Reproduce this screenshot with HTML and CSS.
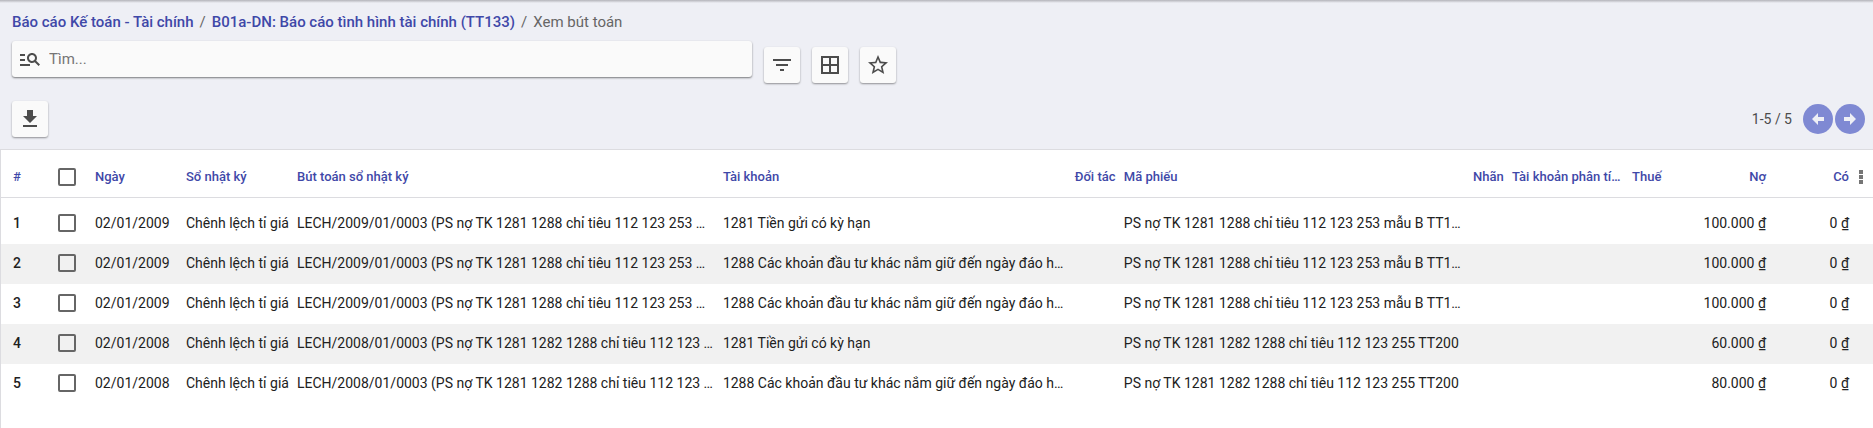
FILE: index.html
```html
<!DOCTYPE html>
<html lang="vi">
<head>
<meta charset="utf-8">
<title>Xem bút toán</title>
<link rel="stylesheet" href="styles.css">
</head>
<body>
<header class="panel">
  <nav class="breadcrumb" aria-label="Breadcrumb">
    <a href="#">Báo cáo Kế toán - Tài chính</a><span>/</span><a href="#">B01a-DN: Báo cáo tình hình tài chính (TT133)</a><span>/</span><span class="current">Xem bút toán</span>
  </nav>
  <div class="search-row">
    <label class="search">
      <svg class="icon" viewBox="0 0 24 24" aria-hidden="true"><path d="M7 9H2V7h5v2zm0 3H2v2h5v-2zm13.590 7-3.830-3.830c-.8.520-1.740.830-2.760.830-2.760 0-5-2.240-5-5s2.240-5 5-5 5 2.240 5 5c0 1.020-.310 1.960-.830 2.750L22 17.590 20.590 19zM17 11c0-1.650-1.350-3-3-3s-3 1.350-3 3 1.350 3 3 3 3-1.350 3-3zM2 19h10v-2H2v2z"/></svg>
      <input type="text" placeholder="Tìm..." aria-label="Tìm">
    </label>
    <div class="tools">
      <button class="tool" type="button" aria-label="Bộ lọc"><svg class="icon" viewBox="0 0 24 24"><path d="M10 18h4v-2h-4v2zM3 6v2h18V6H3zm3 7h12v-2H6v2z"/></svg></button>
      <button class="tool" type="button" aria-label="Nhóm theo"><svg class="icon" viewBox="0 0 24 24"><path d="M3 3v18h18V3H3zm8 16H5v-6h6v6zm0-8H5V5h6v6zm8 8h-6v-6h6v6zm0-8h-6V5h6v6z"/></svg></button>
      <button class="tool" type="button" aria-label="Yêu thích"><svg class="icon" viewBox="0 0 24 24"><path d="M22 9.240l-7.190-.620L12 2 9.190 8.630 2 9.240l5.460 4.730L5.820 21 12 17.270 18.180 21l-1.630-7.030L22 9.240zM12 15.400l-3.760 2.270 1-4.280-3.320-2.880 4.380-.380L12 6.100l1.710 4.040 4.380.380-3.320 2.880 1 4.280L12 15.400z"/></svg></button>
    </div>
  </div>
  <div class="action-row">
    <button class="tool" type="button" aria-label="Xuất"><svg class="icon" viewBox="0 0 24 24"><path d="M19 9h-4V3H9v6H5l7 7 7-7zM5 18v2h14v-2H5z"/></svg></button>
    <div class="pager">
      <span class="range">1-5 / 5</span>
      <button class="page" type="button" aria-label="Trước"><svg class="arrow" viewBox="0 0 12 12"><path d="M6 0v4h6v4H6v4L0 6z"/></svg></button>
      <button class="page" type="button" aria-label="Sau"><svg class="arrow" viewBox="0 0 12 12"><path d="M6 0v4H0v4h6v4l6-6z"/></svg></button>
    </div>
  </div>
</header>
<main class="sheet">
  <table class="list">
    <colgroup>
      <col class="c-num"><col class="c-check"><col class="c-date"><col class="c-journal"><col class="c-entry"><col class="c-account"><col class="c-partner"><col class="c-ref"><col class="c-label"><col class="c-analytic"><col class="c-tax"><col class="c-debit"><col class="c-credit"><col class="c-menu">
    </colgroup>
    <thead>
      <tr>
        <th>#</th><th><input type="checkbox" aria-label="Chọn tất cả"></th><th>Ngày</th><th>Sổ nhật ký</th><th>Bút toán sổ nhật ký</th><th>Tài khoản</th><th>Đối tác</th><th>Mã phiếu</th><th>Nhãn</th><th>Tài khoản phân tích</th><th>Thuế</th><th class="amount">Nợ</th><th class="amount">Có</th>
        <th class="menu-cell"><button class="menu" type="button" aria-label="Cột"><svg viewBox="0 0 4 14"><path d="M0 0h4v4H0zM0 5h4v4H0zM0 10h4v4H0z"/></svg></button></th>
      </tr>
    </thead>
    <tbody>
      <tr class="spacer"><td colspan="14"></td></tr>
      <tr><th>1</th><td><input type="checkbox" aria-label="Chọn dòng 1"></td><td>02/01/2009</td><td>Chênh lệch tỉ giá</td><td>LECH/2009/01/0003 (PS nợ TK 1281 1288 chỉ tiêu 112 123 253 mẫu B TT133)</td><td>1281 Tiền gửi có kỳ hạn</td><td></td><td>PS nợ TK 1281 1288 chỉ tiêu 112 123 253 mẫu B TT133</td><td></td><td></td><td></td><td class="amount">100.000 ₫</td><td class="amount">0 ₫</td><td></td></tr>
      <tr class="alt"><th>2</th><td><input type="checkbox" aria-label="Chọn dòng 2"></td><td>02/01/2009</td><td>Chênh lệch tỉ giá</td><td>LECH/2009/01/0003 (PS nợ TK 1281 1288 chỉ tiêu 112 123 253 mẫu B TT133)</td><td>1288 Các khoản đầu tư khác nắm giữ đến ngày đáo hạn</td><td></td><td>PS nợ TK 1281 1288 chỉ tiêu 112 123 253 mẫu B TT133</td><td></td><td></td><td></td><td class="amount">100.000 ₫</td><td class="amount">0 ₫</td><td></td></tr>
      <tr><th>3</th><td><input type="checkbox" aria-label="Chọn dòng 3"></td><td>02/01/2009</td><td>Chênh lệch tỉ giá</td><td>LECH/2009/01/0003 (PS nợ TK 1281 1288 chỉ tiêu 112 123 253 mẫu B TT133)</td><td>1288 Các khoản đầu tư khác nắm giữ đến ngày đáo hạn</td><td></td><td>PS nợ TK 1281 1288 chỉ tiêu 112 123 253 mẫu B TT133</td><td></td><td></td><td></td><td class="amount">100.000 ₫</td><td class="amount">0 ₫</td><td></td></tr>
      <tr class="alt"><th>4</th><td><input type="checkbox" aria-label="Chọn dòng 4"></td><td>02/01/2008</td><td>Chênh lệch tỉ giá</td><td>LECH/2008/01/0003 (PS nợ TK 1281 1282 1288 chỉ tiêu 112 123 255 TT200)</td><td>1281 Tiền gửi có kỳ hạn</td><td></td><td>PS nợ TK 1281 1282 1288 chỉ tiêu 112 123 255 TT200</td><td></td><td></td><td></td><td class="amount">60.000 ₫</td><td class="amount">0 ₫</td><td></td></tr>
      <tr><th>5</th><td><input type="checkbox" aria-label="Chọn dòng 5"></td><td>02/01/2008</td><td>Chênh lệch tỉ giá</td><td>LECH/2008/01/0003 (PS nợ TK 1281 1282 1288 chỉ tiêu 112 123 255 TT200)</td><td>1288 Các khoản đầu tư khác nắm giữ đến ngày đáo hạn</td><td></td><td>PS nợ TK 1281 1282 1288 chỉ tiêu 112 123 255 TT200</td><td></td><td></td><td></td><td class="amount">80.000 ₫</td><td class="amount">0 ₫</td><td></td></tr>
    </tbody>
  </table>
</main>
</body>
</html>
```
FILE: styles.css
```css
* { box-sizing: border-box; }
body {
  margin: 0;
  min-height: 100vh;
  display: flex;
  flex-direction: column;
  background: #eeeff5;
  color: #212121;
  font-family: Roboto, "Noto Sans", sans-serif;
  font-size: 14px;
}
button { border: 0; padding: 0; font: inherit; cursor: pointer; }
.icon { width: 24px; height: 24px; fill: #4c4c4c; flex: none; display: block; }

.panel {
  padding: 12px 8px 12px 12px;
  background: linear-gradient(#b4b4ba, #eeeff5 3px);
}
.breadcrumb {
  display: flex;
  gap: 6px;
  font-size: 15px;
  line-height: 20px;
  color: #666;
  white-space: nowrap;
}
.breadcrumb a { color: #3f48a8; font-weight: 500; text-decoration: none; }
.search-row { display: flex; gap: 12px; margin-top: 9px; padding-right: 4px; }
.search {
  width: 40%;
  height: 36px;
  display: flex;
  align-items: center;
  gap: 7px;
  padding: 0 6px;
  background: #fafafa;
  border-radius: 3px;
  box-shadow: 0 1px 2px rgba(0, 0, 0, .5);
}
.search input {
  flex: 1;
  min-width: 0;
  border: 0;
  padding: 0;
  outline: 0;
  background: none;
  font: 400 15px Roboto, sans-serif;
}
.search input::placeholder { color: #757575; opacity: 1; }
.tools { display: flex; gap: 12px; padding-top: 6px; }
.tool {
  width: 36px;
  height: 36px;
  display: grid;
  place-items: center;
  background: #fafafa;
  border-radius: 3px;
  box-shadow: 0 1px 2px rgba(0, 0, 0, .4);
}
.action-row {
  display: flex;
  justify-content: space-between;
  align-items: center;
  margin-top: 18px;
}
.pager { display: flex; align-items: center; gap: 2px; }
.range { margin-right: 9px; color: #4c4c4c; }
.page {
  width: 30px;
  height: 30px;
  display: grid;
  place-items: center;
  border-radius: 50%;
  background: #7f89d3;
}
.arrow { width: 12px; height: 12px; fill: #eeeff5; }

.sheet {
  flex: 1;
  background: #fff;
  border-top: 1px solid #dcdce0;
  border-left: 1px solid #dcdce0;
}
.list { width: 100%; table-layout: fixed; border-collapse: collapse; }
.c-num { width: 53px; }
.c-check { width: 37px; }
.c-date { width: 91px; }
.c-journal { width: 111px; }
.c-entry { width: 22.75%; }
.c-account { width: 18.8%; }
.c-partner { width: 49px; }
.c-label { width: 39px; }
.c-analytic { width: 120px; }
.c-tax { width: 42px; }
.c-debit { width: 100px; }
.c-credit { width: 83px; }
.c-menu { width: 20px; }
.list th, .list td {
  height: 40px;
  padding: 0 4px 2px;
  overflow: hidden;
  text-overflow: ellipsis;
  white-space: nowrap;
  text-align: left;
  vertical-align: middle;
  font-weight: 400;
}
.list th:first-child { padding-left: 12px; font-weight: 500; }
.list thead th {
  height: 47px;
  padding-top: 7px;
  padding-bottom: 0;
  border-bottom: 1px solid #dcdce0;
  color: #3f48a8;
  font-size: 13px;
  font-weight: 500;
}
.list .spacer td { height: 7px; padding: 0; }
.list .amount { text-align: right; }
.alt { background: #f1f1f1; }
.list input {
  appearance: none;
  display: block;
  width: 18px;
  height: 18px;
  margin: 0;
  border: 2px solid #666;
  border-radius: 2px;
}
.list .menu-cell { padding-left: 6px; padding-right: 0; }
.menu { display: block; background: none; }
.menu svg { display: block; width: 4px; height: 14px; fill: #757575; }
```
